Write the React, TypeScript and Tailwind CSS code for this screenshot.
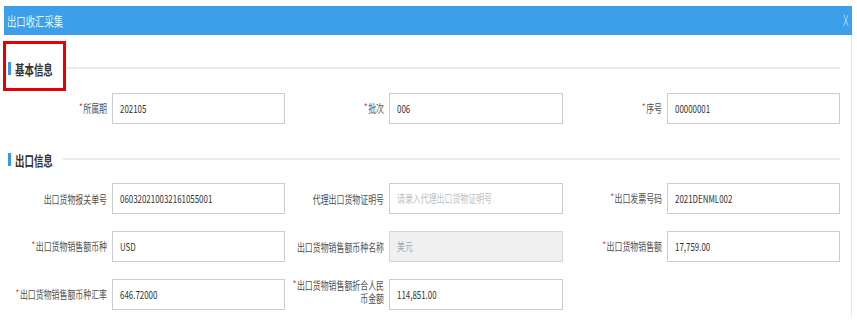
import React from 'react';

// === 数据 ===
type Field = {
  label: string;
  value?: string;
  placeholder?: string;
  required?: boolean;
  disabled?: boolean;
  twoLine?: boolean;
  empty?: boolean;
};

const basicFields: Field[] = [
  { label: '所属期', value: '202105', required: true },
  { label: '批次', value: '006', required: true },
  { label: '序号', value: '00000001', required: true },
];

const exportFields: Field[] = [
  { label: '出口货物报关单号', value: '06032021003216105' + '5001' },
  { label: '代理出口货物证明号', placeholder: '请录入代理出口货物证明号' },
  { label: '出口发票号码', value: '2021DENML002', required: true },
  { label: '出口货物销售额币种', value: 'USD', required: true },
  { label: '出口货物销售额币种名称', value: '美元', disabled: true },
  { label: '出口货物销售额', value: '17,759.00', required: true },
  { label: '出口货物销售额币种汇率', value: '646.72000', required: true },
  { label: '出口货物销售额折合人民币金额', value: '114,851.00', required: true, twoLine: true },
  { label: '', empty: true },
];

const font = { fontFamily: '"Noto Sans CJK SC", "Liberation Sans", sans-serif' };

// === 表单项 ===
const FormItem = ({ f }: { f: Field }) => {
  if (f.empty) return <div className="h-[31px]" />;
  return (
    <div className={f.twoLine ? 'flex items-start h-[31px]' : 'flex items-center h-[31px]'}>
      <div className="w-[104px] shrink-0 flex justify-end pr-[5px]">
        <span className="block w-[137px] shrink-0 text-right origin-right scale-x-[0.72] text-[11px] leading-[12px] text-[#505050]">
          {f.required && <span className="text-[#f01e1e] text-[10px] relative -top-[2px] mr-[1px]">*</span>}
          {f.label}
        </span>
      </div>
      <div
        className={
          f.disabled
            ? 'flex-1 h-[31px] border border-[#d6d6d6] bg-[#f0f0f0] flex items-center pl-[7px] overflow-hidden'
            : 'flex-1 h-[31px] border border-[#cdcdcd] bg-white flex items-center pl-[7px] overflow-hidden'
        }
      >
        <span
          className={
            f.value
              ? f.disabled
                ? 'inline-block whitespace-nowrap origin-left scale-x-[0.72] text-[11px] text-[#a8a8a8]'
                : 'inline-block whitespace-nowrap origin-left scale-x-[0.72] text-[11px] text-[#333]'
              : 'inline-block whitespace-nowrap origin-left scale-x-[0.72] text-[11px] text-[#c0c0c0]'
          }
        >
          {f.value || f.placeholder}
        </span>
      </div>
    </div>
  );
};

// === 分组标题 ===
const SectionTitle = ({ title }: { title: string }) => (
  <div className="flex items-center h-[14px]">
    <div className="w-[3px] h-[13px] bg-[#3a97e6]" />
    <div className="w-[38px] ml-[4px]">
      <span className="inline-block whitespace-nowrap origin-left scale-x-[0.7] text-[13.5px] font-bold text-[#333] leading-[14px]">
        {title}
      </span>
    </div>
    <div className="flex-1 ml-[10px] h-[2px] bg-[#ececec]" />
  </div>
);

const App: React.FC = () => {
  return (
    <div className="relative w-[857px] h-[334px] bg-white overflow-hidden" style={font}>
      <div className="pt-[6px] pl-[4px] w-[852px]">
        {/* 标题栏 */}
        <div className="h-[29px] bg-[#3b9fea] flex items-center justify-between pl-[3px] pr-[3px]">
          <span className="inline-block whitespace-nowrap origin-left scale-x-[0.72] text-[13px] text-[#eaf4fd]">
            出口收汇采集
          </span>
          <span className="inline-block origin-right scale-x-[0.72] text-[14px] font-light text-[#cfe5f8]">X</span>
        </div>

        {/* 内容 */}
        <div className="border-r border-[#e6e6e6] pl-[4px] pr-[11px] pt-[26px] pb-[7px]">
          <SectionTitle title="基本信息" />
          <div className="grid grid-cols-3 mt-[18px]">
            {basicFields.map((f) => (
              <FormItem key={f.label} f={f} />
            ))}
          </div>

          <div className="mt-[28px]">
            <SectionTitle title="出口信息" />
          </div>
          <div className="grid grid-cols-3 gap-y-[17px] mt-[17px]">
            {exportFields.map((f, i) => (
              <FormItem key={i} f={f} />
            ))}
          </div>
        </div>
      </div>

      {/* 标注框 */}
      <div className="absolute left-[3px] top-[41px] w-[63px] h-[50px] border-[3px] border-[#e60000]" />
    </div>
  );
};

export default App;
